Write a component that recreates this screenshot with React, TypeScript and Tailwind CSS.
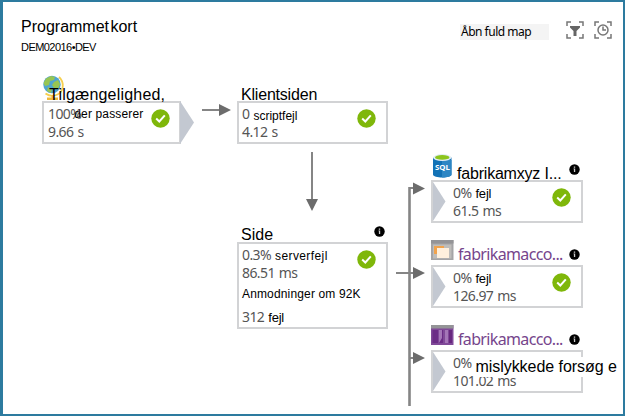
import React from "react";

type BoxProps = { className: string; children?: React.ReactNode };

const sans = "font-['Liberation_Sans',Arial,sans-serif] text-black";
const metric = "font-['Noto_Sans','Open_Sans',sans-serif] text-[#555] text-[14px] tracking-[-0.6px] [word-spacing:1px]";
const box = "flex items-start justify-between border-[2.5px] border-[#d2d3d5]";

function Node({ className, children }: BoxProps) {
  return <section className={`absolute whitespace-nowrap ${className}`}>{children}</section>;
}

function Check({ className = "" }: { className?: string }) {
  return (
    <svg className={`h-[19px] w-[19px] shrink-0 ${className}`} viewBox="0 0 19 19">
      <circle cx="9.5" cy="9.5" r="9.2" fill="#7fb70a" />
      <path d="M5.2 9.6 8.3 12.5 13.8 6.4" fill="none" stroke="#fff" strokeWidth="2" />
    </svg>
  );
}

function Info() {
  return (
    <svg className="h-[11px] w-[11px] shrink-0" viewBox="0 0 11 11">
      <circle cx="5.5" cy="5.5" r="5.2" fill="#000" />
      <path d="M4.5 4.6h1.700v3.400H4.900V5.3h-.4zM4.8 2.4h1.400v1.300H4.8z" fill="#ccc" />
    </svg>
  );
}

function Notch() {
  return (
    <svg className="h-[39px] w-[13px] shrink-0" viewBox="0 0 13 38" preserveAspectRatio="none">
      <path d="M0 0 12.5 19 0 38Z" fill="#c3c8d1" />
    </svg>
  );
}

function Globe() {
  return (
    <svg className="h-[26px] w-[23px] shrink-0" viewBox="0 0 23 26">
      <path d="M17 2c5.500 5 5 14.500-1.500 17.500-4 2-8.500 1.500-12-1" fill="none" stroke="#f6cf4e" strokeWidth="1.800" />
      <path d="M9.500 20h2.500v2.500h4V25H5v-2.500h4.500z" fill="#efb93a" />
      <circle cx="10" cy="9.500" r="8.700" fill="#4fa5cf" />
      <path d="M4 3.500 9 1l4 1-1 3-4 1-1 4-4 1-1.500-3zM12 7l4-2 2 4-2 5-4-1-2-3zM6 12l4 2-1 4-4-2z" fill="#97c552" />
    </svg>
  );
}

function Database() {
  return (
    <svg className="ml-[2px] mr-[5px] h-[24px] w-[19px] shrink-0" viewBox="0 0 19 24">
      <path d="M0 3.500v17C0 24.500 18.500 24.500 18.500 20.500v-17Z" fill="#1272b6" />
      <path d="M9 6h9.500v14.500c0 2-4 3-9.500 3Z" fill="#2d86c4" />
      <ellipse cx="9.250" cy="3.600" rx="9.250" ry="3.500" fill="#e2eef5" />
      <ellipse cx="9.250" cy="3.400" rx="7.200" ry="2.400" fill="#8cc51d" />
      <text x="2" y="15.500" fill="#fff" fontFamily="Noto Sans, sans-serif" fontSize="7.500" fontWeight="700" textLength="15" lengthAdjust="spacingAndGlyphs">SQL</text>
    </svg>
  );
}

function Storage({ purple = false }: { purple?: boolean }) {
  return (
    <svg className="mr-[4px] mt-px h-[20px] w-[23px] shrink-0" viewBox="0 0 23 20">
      <path d="M0 0h22.500v20H0z" fill={purple ? "#804998" : "#a4a4a6"} />
      <path d="M0 0h22.500v3.500H0z" fill="#949497" />
      {purple ? (
        <>
          <path d="M1.500 5h5.500v13H1.500zM8 5h4v13H8z" fill="#6b2c86" />
          <path d="M8 5h3v8l-3 5zM14 5h3v13h-3z" fill="#a576b8" />
          <path d="M18 5h3v13h-3z" fill="#68277f" />
        </>
      ) : (
        <>
          <path d="M2 4.500h18.500v14H2z" fill="#bebdbb" />
          <path d="M3 6h10v8H3z" fill="#f1a34d" />
          <path d="M6 8h12v10H6z" fill="#fff0dd" />
        </>
      )}
    </svg>
  );
}

function Connectors() {
  return (
    <svg className="absolute inset-0 h-full w-full" viewBox="0 0 625 416">
      <g fill="none" stroke="#858585" strokeWidth="2">
        <path d="M202 110h18M312 152v48M396 273h18M409 188h5M409 358h5" />
        <path d="M409.500 187v219" strokeWidth="2.600" />
      </g>
      <path d="M219 104 231 110 219 116ZM306 199h12l-6 12ZM413 182.500 425 188.500 413 194.500ZM413 267 425 273 413 279ZM413 352 425 358 413 364Z" fill="#6c6c6c" />
    </svg>
  );
}

const fejl = `pt-[3px] text-[13px] tracking-[-0.2px] ${sans}`;
const account = "pt-[5px] font-['Noto_Sans',sans-serif] text-[16px] leading-[20px] tracking-[-0.65px] text-[#76458c]";

function Dependency({ className, icon, title, titleClass, value, children, status }: {
  className: string; icon: React.ReactNode; title: string; titleClass: string; value: string; children: React.ReactNode; status?: React.ReactNode;
}) {
  return (
    <Node className={`w-[152px] ${className}`}>
      <header className="flex h-[26px] items-start">
        {icon}
        <h2 className={`flex-1 ${titleClass}`}>{title}</h2>
        <div className="pr-[3px] pt-[10px]"><Info /></div>
      </header>
      <div className={`h-[43px] ${box}`}>
        <Notch />
        <div className="flex-1 pl-[7px] pt-px">
          <div className="flex h-[19px] items-center gap-[4px]"><span className={metric}>0%</span>{children}</div>
          <div className={`h-[18px] leading-[18px] ${metric}`}>{value}</div>
        </div>
        {status}
      </div>
    </Node>
  );
}

export default function App() {
  return (
    <main className="relative h-[416px] w-[625px] overflow-hidden border-b-2 border-l-[3px] border-r-2 border-t-2 border-[#2d7b9f] bg-white">
      <header className="flex h-[56px] items-start justify-between pl-[18px] pr-[11px] pt-[16px]">
        <div className={`whitespace-nowrap ${sans}`}>
          <h1 className="text-[16px] leading-[18px] [word-spacing:-3px]">Programmet kort</h1>
          <p className="mt-[4px] text-[11px] leading-[14px] tracking-[-0.55px]">DEM02016•DEV</p>
        </div>
        <div className="flex items-center gap-[10px] pt-[2px]">
          <button className="mr-[7px] mt-[4px] h-[16px] w-[89px] whitespace-nowrap bg-[#f4f4f4] pl-px text-left font-['Noto_Sans',sans-serif] text-[12px] leading-[16px] tracking-[-0.5px] text-black">Åbn fuld map</button>
          <svg className="h-[18px] w-[18px]" viewBox="0 0 18 18">
            <path d="M1 5V1h4M13 1h4v4M17 13v4h-4M5 17H1v-4" fill="none" stroke="#777" strokeWidth="1.500" />
            <path d="M4 5h10v1.500L10.500 10v5h-3v-5L4 6.500z" fill="#666" />
          </svg>
          <svg className="h-[18px] w-[18px]" viewBox="0 0 18 18" fill="none" stroke="#777" strokeWidth="1.500">
            <path d="M1 5V1h4M13 1h4v4M17 13v4h-4M5 17H1v-4" />
            <circle cx="9" cy="9" r="5" />
            <path d="M9 5.500V9h3" />
          </svg>
        </div>
      </header>

      <div className="absolute -left-[3px] -top-[2px] h-[416px] w-[625px]">
        <Connectors />
        <Node className="left-[42px] top-[75px] w-[152px]">
          <header className="flex h-[26px] items-start">
            <Globe />
            <h2 className={`relative -ml-[16px] pt-[10px] text-[16px] leading-[20px] tracking-[0.2px] ${sans}`}>Tilgængelighed,</h2>
          </header>
          <div className="flex">
            <div className={`h-[43px] w-[139px] pl-[4px] pr-[9px] pt-px ${box}`}>
              <div>
                <div className="flex h-[19px] items-center">
                  <span className={metric}>100%</span>
                  <span className={`-ml-[7px] text-[12px] tracking-[0.15px] ${sans}`}>der passerer</span>
                </div>
                <div className={`h-[18px] leading-[18px] ${metric}`}>9.66 s</div>
              </div>
              <Check className="mt-[5px]" />
            </div>
            <svg className="-ml-px h-[43px] w-[14px]" viewBox="0 0 14 43"><path d="M0 0 14 21.500 0 43Z" fill="#c3c8d1" /></svg>
          </div>
        </Node>

        <Node className="left-[237px] top-[75px] w-[151px]">
          <h2 className={`h-[26px] pl-[4px] pt-[10px] text-[16px] leading-[20px] tracking-[-0.2px] ${sans}`}>Klientsiden</h2>
          <div className={`h-[43px] pl-[3px] pr-[10px] pt-px ${box}`}>
            <div>
              <div className="flex h-[19px] items-center gap-[4px]">
                <span className={metric}>0</span>
                <span className={`pt-[4px] text-[12px] ${sans}`}>scriptfejl</span>
              </div>
              <div className={`h-[18px] leading-[18px] ${metric}`}>4.12 s</div>
            </div>
            <Check className="mt-[5px]" />
          </div>
        </Node>

        <Node className="left-[237px] top-[224px] w-[151px]">
          <header className="flex h-[18px] items-start justify-between pl-[4px] pr-[3px]">
            <h2 className={`text-[16px] leading-[21px] ${sans}`}>Side</h2>
            <div className="pt-[2px]"><Info /></div>
          </header>
          <div className={`h-[87px] pl-[3px] pr-[10px] pt-px ${box}`}>
            <div className="w-[100px]">
              <div className="flex h-[19px] items-center gap-[4px]">
                <span className={metric}>0.3%</span>
                <span className={`pt-[3px] text-[12px] tracking-[0.4px] ${sans}`}>serverfejl</span>
              </div>
              <div className={`h-[18px] leading-[18px] ${metric}`}>86.51 ms</div>
              <div className={`h-[24px] text-[12px] leading-[24px] tracking-[0.15px] ${sans}`}>Anmodninger om 92K</div>
              <div className="flex h-[20px] items-center gap-[4px]">
                <span className={metric}>312</span>
                <span className={fejl}>fejl</span>
              </div>
            </div>
            <Check className="mt-[5px]" />
          </div>
        </Node>

        <Dependency className="left-[431px] top-[154px]" icon={<Database />} title="fabrikamxyz I..." titleClass={`pt-[10px] text-[16px] leading-[20px] tracking-[-0.2px] ${sans}`} value="61.5 ms" status={<Check className="mr-[10px] mt-[6px]" />}>
          <span className={fejl}>fejl</span>
        </Dependency>
        <Dependency className="left-[431px] top-[239px]" icon={<Storage />} title="fabrikamacco..." titleClass={account} value="126.97 ms" status={<Check className="mr-[10px] mt-[6px]" />}>
          <span className={fejl}>fejl</span>
        </Dependency>
        <Dependency className="left-[431px] top-[324px]" icon={<Storage purple />} title="fabrikamacco..." titleClass={account} value="101.02 ms">
          <span className={`z-10 mt-[8px] h-[20px] bg-white text-[16px] leading-[20px] tracking-[-0.05px] ${sans}`}>mislykkede forsøg e</span>
        </Dependency>
      </div>
    </main>
  );
}
